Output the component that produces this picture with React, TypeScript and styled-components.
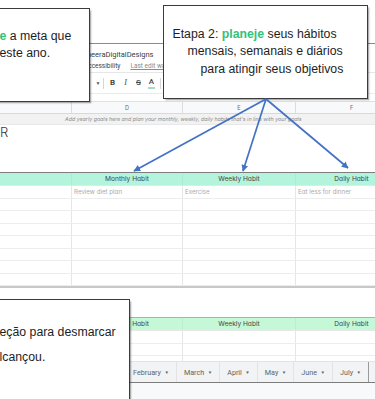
import React from "react";
import styled, { createGlobalStyle } from "styled-components";

const Global = createGlobalStyle`
  html, body { margin: 0; padding: 0; background: #fff; }
  body { font-family: "Liberation Sans", Arial, sans-serif; }
`;

const Page = styled.div`
  position: relative;
  width: 375px;
  height: 399px;
  overflow: hidden;
  background: #fff;
`;

const TopGap = styled.div`
  height: 43px;
`;

const Chrome = styled.div`
  border-top: 1px solid #8a8a8a;
  font-family: Roboto, "Liberation Sans", sans-serif;
`;

const TitleRow = styled.div`
  height: 16px;
  box-sizing: border-box;
  padding: 4px 0 0 76px;
  display: flex;
  align-items: center;
  font-size: 7.5px;
  font-weight: 400;
  color: #3c4043;
  white-space: nowrap;
`;

const MenuRow = styled.div`
  height: 12px;
  display: flex;
  align-items: center;
  gap: 10px;
  padding-left: 84px;
  font-size: 6.5px;
  color: #3c4043;
  white-space: nowrap;
`;

const LastEdit = styled.span`
  color: #8a8a8a;
  text-decoration: underline;
`;

const Toolbar = styled.div`
  height: 21px;
  box-sizing: border-box;
  border-top: 1px solid #e6e6e6;
  display: flex;
  align-items: center;
  padding-left: 95px;
  color: #444746;
`;

const Caret = styled.span`
  width: 6px;
  font-size: 5px;
  text-align: center;
  color: #555;
`;

const ToolDivider = styled.span`
  width: 1px;
  height: 11px;
  background: #d6d6d6;
  margin: 0 2px;
`;

const ToolButton = styled.span<{ $kind: "bold" | "italic" | "strike" | "color" }>`
  width: 13px;
  display: flex;
  flex-direction: column;
  align-items: center;
  font-size: 8px;
  line-height: 8px;
  font-family: ${(p) => (p.$kind === "italic" ? '"Liberation Serif", serif' : 'Roboto, sans-serif')};
  font-weight: ${(p) => (p.$kind === "bold" ? 700 : 500)};
  font-style: ${(p) => (p.$kind === "italic" ? "italic" : "normal")};
  text-decoration: ${(p) => (p.$kind === "strike" ? "line-through" : "none")};
`;

const ColorBar = styled.span`
  width: 7px;
  height: 2px;
  margin-top: 1px;
  background: #a8dcc0;
`;

const FormulaBar = styled.div`
  height: 7px;
  border-top: 1px solid #ececec;
`;

const SheetRow = styled.div<{ $h: number; $bg?: string; $line?: string; $top?: string }>`
  display: grid;
  grid-template-columns: 72px 111px 113px 112px;
  height: ${(p) => p.$h}px;
  box-sizing: border-box;
  background: ${(p) => p.$bg ?? "#fff"};
  border-bottom: 1px solid ${(p) => p.$line ?? "#ededed"};
  border-top: ${(p) => (p.$top ? `1px solid ${p.$top}` : "none")};
`;

const Cell = styled.div<{ $align?: "left" | "center"; $tone?: "head" | "muted" | "letter"; $divider?: string }>`
  border-right: 1px solid ${(p) => p.$divider ?? "#e6e6e6"};
  display: flex;
  align-items: center;
  justify-content: ${(p) => (p.$align === "center" ? "center" : "flex-start")};
  padding: 0 2px;
  overflow: hidden;
  white-space: nowrap;
  font-family: Inter, "Noto Sans", sans-serif;
  font-feature-settings: "cv11" 1;
  font-size: ${(p) => (p.$tone === "letter" ? "5.5px" : p.$tone === "head" ? "6.6px" : "6.2px")};
  color: ${(p) => (p.$tone === "head" ? "#454545" : p.$tone === "letter" ? "#6b6b6b" : "#ababab")};
`;

const NoteRow = styled.div`
  height: 11px;
  box-sizing: border-box;
  background: #f2f2f2;
  border-bottom: 1px solid #e8e8e8;
  display: flex;
  align-items: center;
  padding-left: 65px;
  font-family: Inter, "Noto Sans", sans-serif;
  font-feature-settings: "cv11" 1;
  font-style: italic;
  font-size: 5.3px;
  color: #8c8c8c;
  white-space: nowrap;
`;

const BannerRow = styled.div`
  height: 47px;
  box-sizing: border-box;
  padding-top: 1px;
`;

const BannerTitle = styled.div`
  font-family: Inter, "Noto Sans", sans-serif;
  font-weight: 300;
  font-size: 13px;
  line-height: 13px;
  color: #3a3a3a;
`;

const SheetEnd = styled.div`
  height: 2px;
  background: #c8c8c8;
`;

const Gap = styled.div`
  height: 29px;
`;

const TabBar = styled.div`
  display: flex;
  height: 21px;
  box-sizing: border-box;
  background: #f1f3f4;
  border-bottom: 1px solid #7c7c7c;
  padding-left: 126px;
  font-family: Roboto, "Liberation Sans", sans-serif;
  font-size: 7.2px;
  color: #5f6368;
  white-space: nowrap;
`;

const Tab = styled.div<{ $end?: boolean }>`
  display: flex;
  align-items: center;
  gap: 3.5px;
  padding: 0 7px;
  border-right: 1px solid ${(p) => (p.$end ? "#9a9a9a" : "#e3e3e3")};
`;

const TabCaret = styled.span`
  font-size: 4.5px;
`;

const BottomFill = styled.div`
  height: 30px;
  background: #f8f9fa;
`;

const Callout = styled.div<{ $left: number; $top: number; $w: number; $h: number; $lh: number; $pt: number }>`
  position: absolute;
  left: ${(p) => p.$left}px;
  top: ${(p) => p.$top}px;
  width: ${(p) => p.$w}px;
  height: ${(p) => p.$h}px;
  box-sizing: border-box;
  background: #fff;
  border: 1.5px solid #3b3b3b;
  box-shadow: 1.5px 1.5px 1.5px rgba(0, 0, 0, 0.3);
  padding-top: ${(p) => p.$pt}px;
  font-family: "Liberation Sans", Arial, sans-serif;
  font-size: 12.3px;
  line-height: ${(p) => p.$lh}px;
  color: #1e1e1e;
`;

const CalloutLine = styled.div<{ $indent: number }>`
  padding-left: ${(p) => p.$indent}px;
  white-space: nowrap;
`;

const Accent = styled.span`
  color: #33c27a;
  font-weight: 700;
`;

const ArrowLayer = styled.svg`
  position: absolute;
  left: 0;
  top: 0;
  pointer-events: none;
`;

const COLS = ["", "Monthly Habit", "Weekly Habit", "Daily Habit"];
const TABS = ["February", "March", "April", "May", "June", "July"];

export default function App() {
  const blankRows = Array.from({ length: 7 });
  return (
    <>
      <Global />
      <Page>
        <TopGap />
        <Chrome>
          <TitleRow>SameeraDigitalDesigns</TitleRow>
          <MenuRow>
            <span>Accessibility</span>
            <LastEdit>Last edit was seconds ago</LastEdit>
          </MenuRow>
          <Toolbar>
            <Caret>▼</Caret>
            <ToolDivider />
            <ToolButton $kind="bold">B</ToolButton>
            <ToolButton $kind="italic">I</ToolButton>
            <ToolButton $kind="strike">S</ToolButton>
            <ToolButton $kind="color">
              A
              <ColorBar />
            </ToolButton>
            <ToolDivider />
          </Toolbar>
          <FormulaBar />
        </Chrome>

        <SheetRow $h={13} $bg="#f8f9fa" $line="#d9d9d9" $top="#e0e0e0">
          <Cell $divider="#dcdcdc" />
          <Cell $align="center" $tone="letter" $divider="#dcdcdc">D</Cell>
          <Cell $align="center" $tone="letter" $divider="#dcdcdc">E</Cell>
          <Cell $align="center" $tone="letter" $divider="#dcdcdc">F</Cell>
        </SheetRow>
        <NoteRow>
          Add yearly goals here and plan your monthly, weekly, daily habits that's in line with your goals
        </NoteRow>
        <BannerRow>
          <BannerTitle>R</BannerTitle>
        </BannerRow>
        <SheetRow $h={14} $bg="#b4f4dd" $line="#e6e6e6" $top="#7d7d7d">
          {COLS.map((c, i) => (
            <Cell key={i} $align="center" $tone="head" $divider="rgba(0,0,0,0.04)">
              {c}
            </Cell>
          ))}
        </SheetRow>
        <SheetRow $h={12.5}>
          <Cell />
          <Cell>Review diet plan</Cell>
          <Cell>Exercise</Cell>
          <Cell>Eat less for dinner</Cell>
        </SheetRow>
        {blankRows.map((_, i) => (
          <SheetRow key={i} $h={12.5}>
            <Cell />
            <Cell />
            <Cell />
            <Cell />
          </SheetRow>
        ))}
        <SheetEnd />

        <Gap />

        <SheetRow $h={14} $bg="#c4f8d7" $line="#e8e8e8" $top="#b0b0b0">
          {COLS.map((c, i) => (
            <Cell key={i} $align="center" $tone="head" $divider="rgba(0,0,0,0.04)">
              {c}
            </Cell>
          ))}
        </SheetRow>
        <SheetRow $h={13}>
          <Cell />
          <Cell />
          <Cell />
          <Cell />
        </SheetRow>
        <SheetRow $h={12}>
          <Cell />
          <Cell />
          <Cell />
          <Cell />
        </SheetRow>
        <SheetRow $h={6} $line="#e3e3e3">
          <Cell />
          <Cell />
          <Cell />
          <Cell />
        </SheetRow>
        <TabBar>
          {TABS.map((t, i) => (
            <Tab key={t} $end={i === TABS.length - 1}>
              {t}
              <TabCaret>▼</TabCaret>
            </Tab>
          ))}
        </TabBar>
        <BottomFill />

        <Callout $left={-10} $top={8} $w={100} $h={94} $lh={17} $pt={19}>
          <CalloutLine $indent={8.5}>
            <Accent>e</Accent> a meta que
          </CalloutLine>
          <CalloutLine $indent={8.5}>este ano.</CalloutLine>
        </Callout>

        <Callout $left={163} $top={5} $w={205} $h={94} $lh={17.5} $pt={19.5}>
          <CalloutLine $indent={8.5}>
            Etapa 2: <Accent>planeje</Accent> seus hábitos
          </CalloutLine>
          <CalloutLine $indent={23.5}>mensais, semanais e diários</CalloutLine>
          <CalloutLine $indent={36.5}>para atingir seus objetivos</CalloutLine>
        </Callout>

        <Callout $left={-10} $top={299} $w={140} $h={120} $lh={25} $pt={20}>
          <CalloutLine $indent={8.5}>eção para desmarcar</CalloutLine>
          <CalloutLine $indent={8.5}>lcançou.</CalloutLine>
        </Callout>

        <ArrowLayer width={375} height={399} viewBox="0 0 375 399">
          <defs>
            <marker
              id="arrowhead"
              viewBox="0 0 10 10"
              refX="9"
              refY="5"
              markerWidth="4"
              markerHeight="4"
              orient="auto"
            >
              <path d="M0 0 L10 5 L0 10 z" fill="#4472c4" />
            </marker>
          </defs>
          <g stroke="#4472c4" strokeWidth={1.7} fill="none" markerEnd="url(#arrowhead)">
            <line x1={266} y1={99} x2={134} y2={171} />
            <line x1={266} y1={99} x2={243} y2={171} />
            <line x1={266} y1={99} x2={348} y2={168} />
          </g>
        </ArrowLayer>
      </Page>
    </>
  );
}
